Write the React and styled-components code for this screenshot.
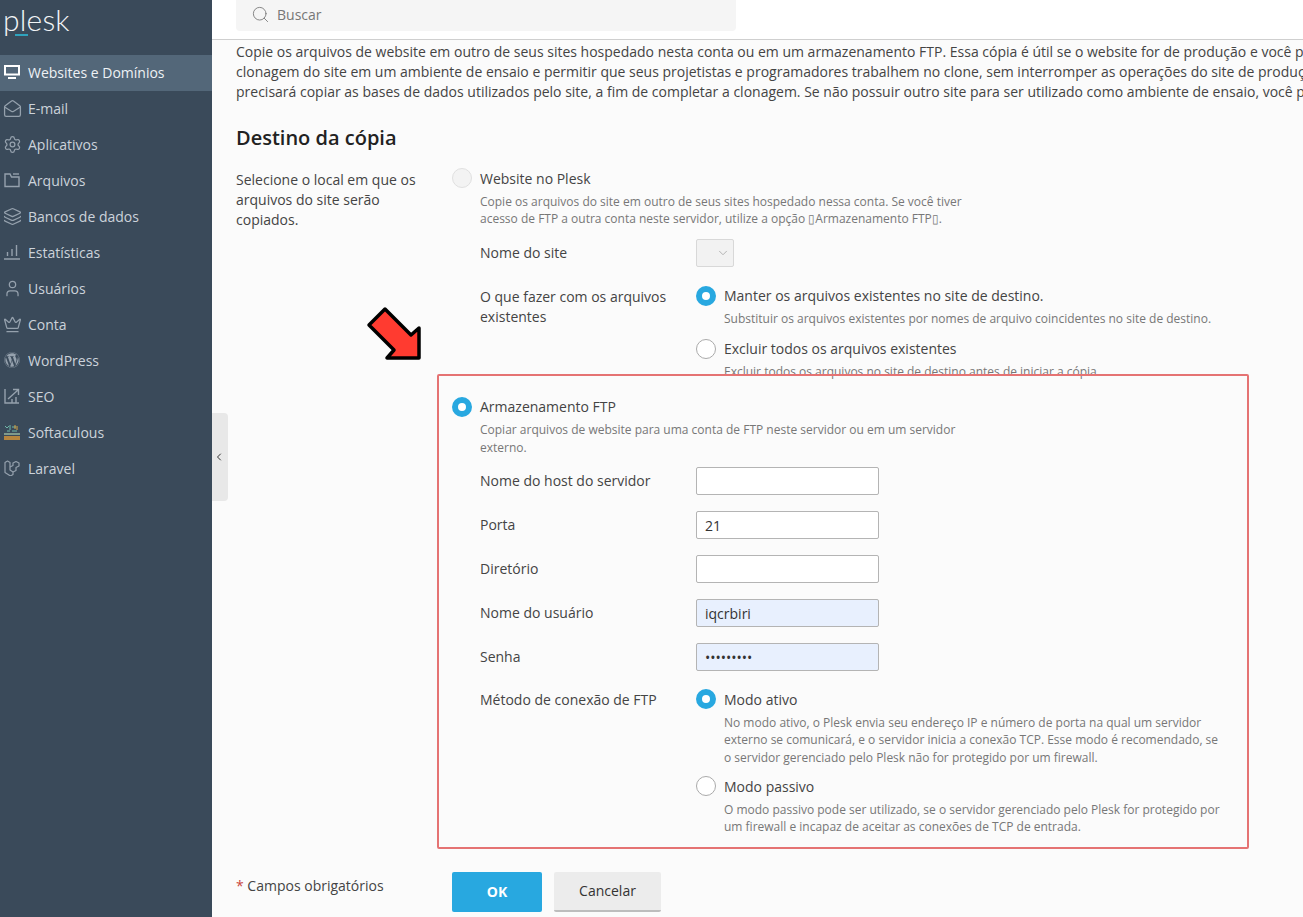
import styled, { createGlobalStyle } from 'styled-components';
import {
  MailOpen, Settings, Layers, User, Crown, Search, ChevronLeft, ChevronDown,
} from 'lucide-react';
import { FaWordpress } from 'react-icons/fa';

const GlobalStyle = createGlobalStyle`
  html, body { margin: 0; padding: 0; height: 100%; overflow: hidden; }
  body { font-family: "Open Sans", "Liberation Sans", sans-serif; font-size: 14px; color: #444; }
  * { box-sizing: border-box; }
`;

function MonitorIcon() {
  return (
    <svg width="16" height="14" viewBox="0 0 16 14" fill="none" stroke="currentColor">
      <rect x="1" y="1" width="14" height="8.5" strokeWidth="2" />
      <path d="M4 13h8" strokeWidth="2" />
    </svg>
  );
}

function FolderIcon() {
  return (
    <svg width="16" height="16" viewBox="0 0 16 16" fill="none" stroke="currentColor" strokeWidth="1.4">
      <path d="M1 2V14.5h14V5H7.5L6 2z" />
      <path d="M9 2h6" />
    </svg>
  );
}

function StatsIcon() {
  return (
    <svg width="16" height="16" viewBox="0 0 16 16" fill="none" stroke="currentColor" strokeWidth="1.4">
      <path d="M0 15h16M3.5 12V8M8 12V5M12.5 12V1" />
    </svg>
  );
}

function SeoIcon() {
  return (
    <svg width="16" height="16" viewBox="0 0 16 16" fill="none" stroke="currentColor" strokeWidth="1.4">
      <path d="M1 1v14h14" />
      <path d="M4 11l10-9M9 1.5h5.5V7M8 15v-4M12 15V9" />
    </svg>
  );
}

function SoftaculousIcon() {
  return (
    <svg width="16" height="16" viewBox="0 0 16 16">
      <rect x="0" y="12" width="16" height="4" fill="#b5853f" />
      <rect x="0" y="9" width="16" height="2" fill="#7f9a8c" />
      <path d="M1 2l2 2 2-2M6 1v5M8 3h4M3 7h3M8 7h5" stroke="#6fb7a8" strokeWidth="1" fill="none" />
      <path d="M11 1v4M13 2v4" stroke="#d9a441" strokeWidth="1" />
    </svg>
  );
}

function LaravelIcon() {
  return (
    <svg width="16" height="16" viewBox="0 0 16 16" fill="none" stroke="currentColor" strokeWidth="1.2" strokeLinejoin="round">
      <path d="M1 2.5l2.5-1.5L6 2.5v7.5l3 2v2.5L6.5 16 1 12.5z" />
      <path d="M6 7l3-1.500 0-2.500 3-1.500 3 1.500v3l-3 1.500v3L9 12" />
    </svg>
  );
}

const menu = [
  { label: 'Websites e Domínios', icon: <MonitorIcon />, active: true },
  { label: 'E-mail', icon: <MailOpen size={19} strokeWidth={1.6} /> },
  { label: 'Aplicativos', icon: <Settings size={19} strokeWidth={1.6} /> },
  { label: 'Arquivos', icon: <FolderIcon /> },
  { label: 'Bancos de dados', icon: <Layers size={19} strokeWidth={1.6} /> },
  { label: 'Estatísticas', icon: <StatsIcon /> },
  { label: 'Usuários', icon: <User size={19} strokeWidth={1.6} /> },
  { label: 'Conta', icon: <Crown size={19} strokeWidth={1.6} /> },
  { label: 'WordPress', icon: <FaWordpress size={16} /> },
  { label: 'SEO', icon: <SeoIcon /> },
  { label: 'Softaculous', icon: <SoftaculousIcon /> },
  { label: 'Laravel', icon: <LaravelIcon /> },
];

const ftpFields = [
  { label: 'Nome do host do servidor', value: '' },
  { label: 'Porta', value: '21' },
  { label: 'Diretório', value: '' },
  { label: 'Nome do usuário', value: 'iqcrbiri', autofill: true },
  { label: 'Senha', value: 'iqcrbiri1', autofill: true, type: 'password' },
];

export default function App() {
  return (
    <>
      <GlobalStyle />
      <Shell>
        <Sidebar>
          <LogoBox>
            <Logo>plesk</Logo>
            <LogoMark />
          </LogoBox>
          <Menu>
            {menu.map(item => (
              <MenuItem key={item.label} $active={item.active}>
                <MenuIcon $active={item.active}>{item.icon}</MenuIcon>
                {item.label}
              </MenuItem>
            ))}
          </Menu>
        </Sidebar>

        <Main>
          <Handle><ChevronLeft size={12} strokeWidth={2} /></Handle>
          <Header>
            <SearchBox>
              <Search size={19} strokeWidth={1.1} color="#777" />
              Buscar
            </SearchBox>
          </Header>

          <Content>
            <Intro>
              <IntroLine>Copie os arquivos de website em outro de seus sites hospedado nesta conta ou em um armazenamento FTP. Essa cópia é útil se o website for de produção e você pretende</IntroLine>
              <IntroLine>clonagem do site em um ambiente de ensaio e permitir que seus projetistas e programadores trabalhem no clone, sem interromper as operações do site de produção</IntroLine>
              <IntroLine>precisará copiar as bases de dados utilizados pelo site, a fim de completar a clonagem. Se não possuir outro site para ser utilizado como ambiente de ensaio, você pode</IntroLine>
            </Intro>

            <Heading>Destino da cópia</Heading>

            <FormRow>
              <SectionLabel>Selecione o local em que os arquivos do site serão copiados.</SectionLabel>
              <div>
                <Choice>
                  <Radio $state="disabled" />
                  Website no Plesk
                </Choice>
                <Indented>
                  <Hint>Copie os arquivos do site em outro de seus sites hospedado nessa conta. Se você tiver acesso de FTP a outra conta neste servidor, utilize a opção ▯Armazenamento FTP▯.</Hint>
                  <Field $top={11}>
                    <FieldLabel>Nome do site</FieldLabel>
                    <SelectBox><ChevronDown size={14} strokeWidth={1.5} /></SelectBox>
                  </Field>
                  <Field $top={19} $start>
                    <FieldLabel $start>O que fazer com os arquivos existentes</FieldLabel>
                    <div>
                      <Choice>
                        <Radio $state="on" />
                        Manter os arquivos existentes no site de destino.
                      </Choice>
                      <SubHint>Substituir os arquivos existentes por nomes de arquivo coincidentes no site de destino.</SubHint>
                      <Choice $top={11}>
                        <Radio />
                        Excluir todos os arquivos existentes
                      </Choice>
                      <SubHint>Excluir todos os arquivos no site de destino antes de iniciar a cópia.</SubHint>
                    </div>
                  </Field>
                </Indented>

                <Choice $top={16}>
                  <Radio $state="on" />
                  Armazenamento FTP
                </Choice>
                <Indented>
                  <Hint>Copiar arquivos de website para uma conta de FTP neste servidor ou em um servidor externo.</Hint>
                  {ftpFields.map((field, index) => (
                    <Field key={field.label} $top={index === 0 ? 11 : 16}>
                      <FieldLabel>{field.label}</FieldLabel>
                      <TextInput
                        type={field.type || 'text'}
                        defaultValue={field.value}
                        $autofill={field.autofill}
                      />
                    </Field>
                  ))}
                  <Field $top={18} $start>
                    <FieldLabel $start>Método de conexão de FTP</FieldLabel>
                    <div>
                      <Choice>
                        <Radio $state="on" />
                        Modo ativo
                      </Choice>
                      <SubHint>No modo ativo, o Plesk envia seu endereço IP e número de porta na qual um servidor externo se comunicará, e o servidor inicia a conexão TCP. Esse modo é recomendado, se o servidor gerenciado pelo Plesk não for protegido por um firewall.</SubHint>
                      <Choice $top={10}>
                        <Radio />
                        Modo passivo
                      </Choice>
                      <SubHint>O modo passivo pode ser utilizado, se o servidor gerenciado pelo Plesk for protegido por um firewall e incapaz de aceitar as conexões de TCP de entrada.</SubHint>
                    </div>
                  </Field>
                </Indented>
              </div>
            </FormRow>

            <Actions>
              <Required><Star>*</Star> Campos obrigatórios</Required>
              <Buttons>
                <OkButton>OK</OkButton>
                <CancelButton>Cancelar</CancelButton>
              </Buttons>
            </Actions>
          </Content>

          {/* annotation drawn on top of the screenshot */}
          <Highlight />
          <Arrow viewBox="0 0 56 56" width="56" height="56">
            <path
              d="M19 3 L3 19 L28 44 L21 52 L53 52 L53 22 L45 29 Z"
              fill="#ff3b30"
              stroke="#000"
              strokeWidth="3.5"
              strokeLinejoin="round"
            />
          </Arrow>
        </Main>
      </Shell>
    </>
  );
}

//Style
const Shell = styled.div`
  display: flex;
  width: 100%;
  height: 917px;
  overflow: hidden;
  background: #fbfbfb;
`;

const Sidebar = styled.aside`
  flex: 0 0 212px;
  background: #3a4a5a;
  display: flex;
  flex-direction: column;
`;

const LogoBox = styled.div`
  position: relative;
  height: 55px;
  padding-left: 3px;
`;

const Logo = styled.div`
  font-family: "Lato", sans-serif;
  font-weight: 300;
  font-size: 30px;
  line-height: 38px;
  color: #f2f5f7;
  letter-spacing: 0.2px;
`;

const LogoMark = styled.span`
  position: absolute;
  left: 15px;
  top: 34px;
  width: 13px;
  height: 2px;
  background: #2fa3bd;
`;

const Menu = styled.nav`
  display: flex;
  flex-direction: column;
`;

const MenuItem = styled.a`
  height: 36px;
  display: flex;
  align-items: center;
  gap: 8px;
  padding: 0 0 2px 4px;
  font-size: 14px;
  color: ${p => (p.$active ? '#eef2f5' : '#ccd3da')};
  background: ${p => (p.$active ? '#536779' : 'transparent')};
`;

const MenuIcon = styled.span`
  width: 16px;
  height: 16px;
  display: flex;
  align-items: center;
  justify-content: center;
  color: ${p => (p.$active ? '#fff' : '#95a1ad')};

  svg { flex: none; }
`;

const Main = styled.main`
  flex: 1;
  min-width: 0;
  position: relative;
  display: flex;
  flex-direction: column;
`;

const Handle = styled.div`
  position: absolute;
  left: 0;
  top: 413px;
  width: 16px;
  height: 88px;
  background: #e8e8e8;
  border-radius: 0 4px 4px 0;
  padding-right: 2px;
  display: flex;
  align-items: center;
  justify-content: center;
  color: #333;
`;

const Header = styled.header`
  height: 40px;
  flex: none;
  background: #fff;
  border-bottom: 1px solid #cfcfcf;
  padding-left: 24px;
`;

const SearchBox = styled.div`
  width: 500px;
  height: 31px;
  background: #f5f5f5;
  border-radius: 0 0 4px 4px;
  display: flex;
  align-items: center;
  gap: 7px;
  padding: 0 0 2px 15px;
  color: #777;
  font-size: 14px;
`;

const Content = styled.div`
  padding-left: 24px;
  overflow: hidden;
`;

const Intro = styled.div`
  margin-top: 2px;
`;

const IntroLine = styled.div`
  white-space: nowrap;
  line-height: 20px;
  font-size: 14px;
  color: #444;
`;

const Heading = styled.h2`
  margin: 24px 0 18px;
  font-size: 20px;
  line-height: 24px;
  font-weight: 600;
  color: #222;
`;

const FormRow = styled.div`
  display: grid;
  grid-template-columns: 216px 1fr;
`;

const SectionLabel = styled.div`
  width: 190px;
  line-height: 20px;
  padding-top: 2px;
`;

const Choice = styled.div`
  display: flex;
  align-items: center;
  gap: 8px;
  height: 20px;
  margin-top: ${p => p.$top || 0}px;
  color: #444;
  white-space: nowrap;
`;

const Radio = styled.span`
  flex: none;
  width: 20px;
  height: 20px;
  border-radius: 50%;
  background: ${p => (p.$state === 'disabled' ? '#f3f3f3' : '#fff')};
  border: ${p => {
    if (p.$state === 'on') return '6px solid #28a8e0';
    if (p.$state === 'disabled') return '1px solid #e0e0e0';
    return '1px solid #aaa';
  }};
`;

const Indented = styled.div`
  margin-left: 28px;
`;

const Hint = styled.p`
  margin: 4.5px 0 0;
  max-width: 490px;
  font-size: 12px;
  line-height: 17.5px;
  color: #777;
`;

const SubHint = styled(Hint)`
  margin-left: 28px;
  max-width: 500px;
`;

const Field = styled.div`
  display: grid;
  grid-template-columns: 216px 1fr;
  align-items: ${p => (p.$start ? 'start' : 'center')};
  margin-top: ${p => p.$top || 0}px;
`;

const FieldLabel = styled.div`
  width: 196px;
  line-height: 20px;
  padding-top: ${p => (p.$start ? 1 : 0)}px;
  color: #444;
`;

const SelectBox = styled.div`
  width: 38px;
  height: 28px;
  background: #f2f2f2;
  border: 1px solid #d8d8d8;
  border-radius: 2px;
  display: flex;
  align-items: center;
  justify-content: flex-end;
  padding-right: 3px;
  color: #aaa;
`;

const TextInput = styled.input`
  width: 183px;
  height: 28px;
  padding: 0 8px;
  font-family: inherit;
  font-size: 14px;
  color: #333;
  background: ${p => (p.$autofill ? '#e8f0fe' : '#fff')};
  border: 1px solid #b4b4b4;
  border-radius: 2px;
  outline: none;
`;

const Actions = styled.div`
  display: grid;
  grid-template-columns: 216px 1fr;
  margin-top: 36px;
`;

const Required = styled.div`
  padding-top: 4px;
  line-height: 20px;
  color: #444;
`;

const Star = styled.span`
  color: #c9463d;
`;

const Buttons = styled.div`
  display: flex;
  gap: 12px;
`;

const OkButton = styled.button`
  width: 90px;
  height: 40px;
  border: 0;
  border-radius: 2px;
  background: #28a8e0;
  color: #fff;
  font-family: inherit;
  font-size: 14px;
  font-weight: 700;
`;

const CancelButton = styled.button`
  width: 107px;
  height: 40px;
  border: 0;
  border-bottom: 2px solid #bdbdbd;
  border-radius: 2px;
  background: #ececec;
  color: #333;
  font-family: inherit;
  font-size: 14px;
  font-weight: 400;
`;

const Highlight = styled.div`
  position: absolute;
  left: 225px;
  top: 374px;
  width: 812px;
  height: 475px;
  border: 2px solid #e57373;
  border-radius: 2px;
  pointer-events: none;
`;

const Arrow = styled.svg`
  position: absolute;
  left: 154px;
  top: 306px;
`;
